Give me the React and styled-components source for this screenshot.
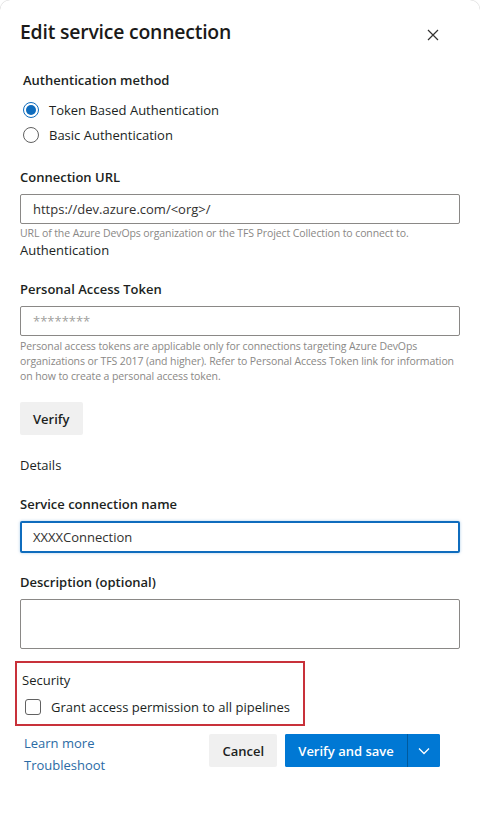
import styled, { createGlobalStyle } from "styled-components";

const GlobalStyle = createGlobalStyle`
  html, body {
    margin: 0;
    padding: 0;
    background: #ffffff;
  }
  body {
    font-family: "Open Sans", "Noto Sans", "Liberation Sans", sans-serif;
    color: #201f1e;
  }
  * {
    box-sizing: border-box;
  }
`;

const Dialog = styled.div`
  width: 480px;
  min-height: 837px;
  background: #ffffff;
  border-top-left-radius: 10px;
  border-top-right-radius: 10px;
  box-shadow: 0 0 1px rgba(0, 0, 0, 0.35);
  padding: 18px 20px 40px 20px;
  display: flex;
  flex-direction: column;
`;

const Header = styled.div`
  display: flex;
  align-items: center;
  justify-content: space-between;
  margin-bottom: 26px;
`;

const Title = styled.h1`
  margin: 0;
  font-size: 19.4px;
  font-weight: 600;
  letter-spacing: -0.2px;
  color: #1b1a19;
`;

const CloseButton = styled.button`
  border: none;
  background: none;
  padding: 0;
  margin-right: 20px;
  margin-top: 7px;
  width: 14px;
  height: 14px;
  display: flex;
  align-items: center;
  justify-content: center;
  cursor: pointer;
`;

const Label = styled.div`
  font-size: 13px;
  font-weight: 600;
  line-height: 18px;
  margin-left: ${(p) => p.$indent || 0}px;
  margin-top: ${(p) => p.$top || 0}px;
  margin-bottom: ${(p) => p.$gap ?? 8}px;
`;

const SectionText = styled.div`
  font-size: 13px;
  line-height: 18px;
  margin-top: ${(p) => p.$top || 0}px;
  margin-bottom: ${(p) => p.$bottom || 0}px;
`;

const RadioGroup = styled.div`
  display: flex;
  flex-direction: column;
  gap: 7px;
  margin-left: 3px;
  margin-bottom: 24px;
`;

const RadioRow = styled.label`
  display: flex;
  align-items: center;
  gap: 10px;
  font-size: 13px;
  line-height: 18px;
`;

const RadioDot = styled.span`
  width: 16px;
  height: 16px;
  border-radius: 50%;
  border: 1px solid ${(p) => (p.$checked ? "#0f6cbd" : "#616161")};
  display: flex;
  align-items: center;
  justify-content: center;
  &::after {
    content: "";
    width: 10px;
    height: 10px;
    border-radius: 50%;
    background: ${(p) => (p.$checked ? "#0f6cbd" : "transparent")};
  }
`;

const Field = styled.div`
  width: 440px;
  height: ${(p) => p.$height || 30}px;
  border: ${(p) => (p.$focused ? "2px solid #0f6cbd" : "1px solid #8a8886")};
  border-radius: 2px;
  display: flex;
  align-items: center;
  padding: 0 ${(p) => (p.$focused ? 11 : 12)}px;
  font-size: 13px;
  color: ${(p) => (p.$placeholder ? "#a19f9d" : "#323130")};
  box-shadow: ${(p) => (p.$focused ? "0 0 3px rgba(15,108,189,0.35)" : "none")};
`;

const Help = styled.div`
  font-size: 10.5px;
  line-height: 15px;
  color: #8a8886;
  margin-top: ${(p) => p.$top || 2}px;
  letter-spacing: -0.1px;
`;

const GreyButton = styled.button`
  border: none;
  border-radius: 2px;
  background: #f0f0f0;
  height: 33px;
  padding: 0 13px;
  font-family: inherit;
  font-size: 13px;
  font-weight: 600;
  color: #201f1e;
  align-self: ${(p) => p.$self || "auto"};
  margin-top: ${(p) => p.$top || 0}px;
`;

const Spacer = styled.div`
  height: ${(p) => p.$h}px;
`;

const SecurityBox = styled.div`
  margin-left: -5px;
  width: 290px;
  border: 2px solid #c8313a;
  padding: 8px 8px 8px 5px;
  display: flex;
  flex-direction: column;
  gap: 9px;
`;

const CheckRow = styled.label`
  display: flex;
  align-items: center;
  gap: 10px;
  padding-left: 3px;
  font-size: 13px;
  line-height: 18px;
`;

const CheckBox = styled.span`
  width: 16px;
  height: 16px;
  border-radius: 3px;
  border: 1px solid #616161;
`;

const Footer = styled.div`
  display: flex;
  justify-content: space-between;
  align-items: flex-start;
  margin-top: 8px;
  padding-right: 20px;
`;

const Links = styled.div`
  display: flex;
  flex-direction: column;
  gap: 4px;
  padding-left: 4px;
`;

const Link = styled.a`
  font-size: 13px;
  line-height: 18px;
  color: #2b6ba5;
  text-decoration: none;
`;

const Actions = styled.div`
  display: flex;
  gap: 8px;
`;

const SplitButton = styled.div`
  display: flex;
  height: 33px;
  border-radius: 2px;
  overflow: hidden;
  background: #0078d4;
`;

const PrimaryButton = styled.button`
  border: none;
  background: #0078d4;
  color: #ffffff;
  font-family: inherit;
  font-size: 13px;
  font-weight: 600;
  padding: 0 13px;
  width: 122px;
`;

const Chevron = styled.button`
  border: none;
  border-left: 1px solid #005a9e;
  background: #0078d4;
  width: 33px;
  display: flex;
  align-items: center;
  justify-content: center;
  padding: 0;
`;

export default function App() {
  return (
    <>
      <GlobalStyle />
      <Dialog>
        <Header>
          <Title>Edit service connection</Title>
          <CloseButton aria-label="Close">
            <svg width="12" height="12" viewBox="0 0 12 12">
              <path d="M1 1 L11 11 M11 1 L1 11" stroke="#323130" strokeWidth="1.2" />
            </svg>
          </CloseButton>
        </Header>

        <Label $indent={3} $gap={12}>Authentication method</Label>
        <RadioGroup>
          <RadioRow>
            <RadioDot $checked />
            Token Based Authentication
          </RadioRow>
          <RadioRow>
            <RadioDot />
            Basic Authentication
          </RadioRow>
        </RadioGroup>

        <Label>Connection URL</Label>
        <Field>https://dev.azure.com/&lt;org&gt;/</Field>
        <Help>URL of the Azure DevOps organization or the TFS Project Collection to connect to.</Help>
        <SectionText $bottom={21}>Authentication</SectionText>

        <Label>Personal Access Token</Label>
        <Field $placeholder>********</Field>
        <Help $top={3}>
          Personal access tokens are applicable only for connections targeting Azure DevOps
          organizations or TFS 2017 (and higher). Refer to Personal Access Token link for information
          on how to create a personal access token.
        </Help>

        <GreyButton $self="flex-start" $top={18}>Verify</GreyButton>

        <SectionText $top={21} $bottom={21}>Details</SectionText>

        <Label>Service connection name</Label>
        <Field $focused $height={32}>XXXXConnection</Field>

        <Label $top={20}>Description (optional)</Label>
        <Field $height={50} />

        <Spacer $h={12} />
        <SecurityBox>
          <SectionText>Security</SectionText>
          <CheckRow>
            <CheckBox />
            Grant access permission to all pipelines
          </CheckRow>
        </SecurityBox>

        <Footer>
          <Links>
            <Link href="#">Learn more</Link>
            <Link href="#">Troubleshoot</Link>
          </Links>
          <Actions>
            <GreyButton>Cancel</GreyButton>
            <SplitButton>
              <PrimaryButton>Verify and save</PrimaryButton>
              <Chevron aria-label="More options">
                <svg width="12" height="8" viewBox="0 0 12 8">
                  <path d="M1 1.5 L6 6.5 L11 1.5" stroke="#ffffff" strokeWidth="1.3" fill="none" />
                </svg>
              </Chevron>
            </SplitButton>
          </Actions>
        </Footer>
      </Dialog>
    </>
  );
}
